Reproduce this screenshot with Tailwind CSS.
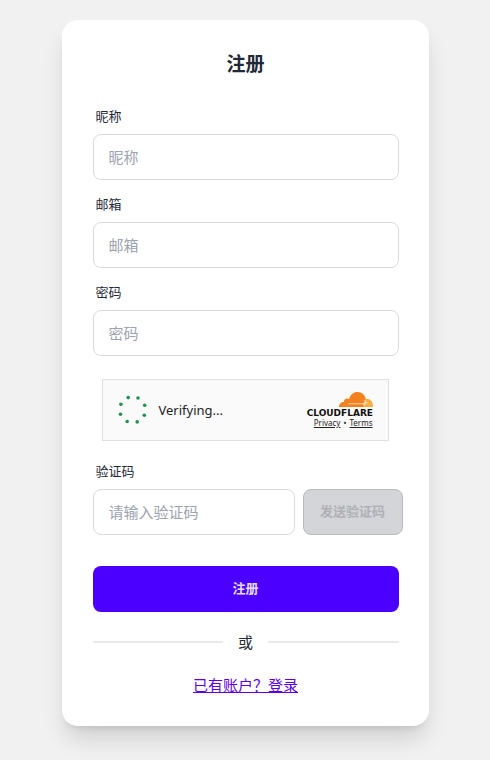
<!DOCTYPE html>
<html lang="zh-CN">
<head>
  <meta charset="UTF-8" />
  <meta name="viewport" content="width=device-width, initial-scale=1.0" />
  <title>注册</title>
  <script src="https://cdn.jsdelivr.net/npm/@tailwindcss/browser@4"></script>
</head>
<body class="min-h-screen bg-[#f1f1f1] px-4 py-5 font-['Noto_Sans','Noto_Sans_CJK_SC',sans-serif] text-[#1f2937] antialiased">

  <!-- Register card -->
  <main class="w-full max-w-[367px] mx-auto bg-white rounded-2xl shadow-[0_16px_24px_-4px_rgb(0_0_0/0.14),0_6px_10px_-6px_rgb(0_0_0/0.14)] pl-[31px] pr-[30px] pt-[31px] pb-[29px]">
    <h1 class="text-[19px] leading-[26px] font-bold text-center mb-[29px]">注册</h1>

    <form>
      <div class="mb-[14px]">
        <label for="nickname" class="block px-[3px] mb-2 text-[13px] leading-5">昵称</label>
        <input id="nickname" type="text" placeholder="昵称" class="block w-full h-[46px] px-[15px] text-[15px] border border-[#d9dadc] rounded-lg placeholder:text-[#9ca3af]" />
      </div>
      <div class="mb-[14px]">
        <label for="email" class="block px-[3px] mb-2 text-[13px] leading-5">邮箱</label>
        <input id="email" type="email" placeholder="邮箱" class="block w-full h-[46px] px-[15px] text-[15px] border border-[#d9dadc] rounded-lg placeholder:text-[#9ca3af]" />
      </div>
      <div>
        <label for="password" class="block px-[3px] mb-2 text-[13px] leading-5">密码</label>
        <input id="password" type="password" placeholder="密码" class="block w-full h-[46px] px-[15px] text-[15px] border border-[#d9dadc] rounded-lg placeholder:text-[#9ca3af]" />
      </div>

      <!-- Turnstile -->
      <div class="flex items-center justify-between h-[62px] ml-[9px] mr-[10px] mt-[23px] mb-5 px-[15px] bg-[#fafafa] border border-[#e0e0e0]">
        <div class="flex items-center gap-[11px]">
          <svg class="w-[30px] h-[30px]" viewBox="0 0 30 30" fill="#1f9150">
            <circle cx="10.2" cy="2.6" r="1.8" />
            <circle cx="20" cy="3" r="1.8" />
            <circle cx="26.7" cy="10.2" r="1.8" />
            <circle cx="26.3" cy="20.2" r="1.8" />
            <circle cx="19.2" cy="26.9" r="1.8" />
            <circle cx="9.2" cy="26.5" r="1.8" />
            <circle cx="2.5" cy="19.3" r="1.8" />
            <circle cx="2.9" cy="9.3" r="1.8" />
          </svg>
          <span class="text-[13px] leading-5 text-[#232323]">Verifying...</span>
        </div>
        <div class="flex flex-col items-end">
          <svg class="w-[70px] h-[26px]" viewBox="0 0 70 26" role="img" aria-label="Cloudflare">
            <path d="M36 16c0-3 2-5 5-5-.5-3 3-4.500 5-2.800C47.500 3.500 50.500 1 54.500 1c4.500 0 7.500 3 8.300 7 .5 3-.2 5.500-1.300 8z" fill="#f4811f" />
            <path d="M61 16l1.200-3.500c.5-1.500-.3-2.300-1.800-2.400l3-2.300c4 0 6.600 3.200 6.600 7.200V16z" fill="#faad3f" />
            <path d="M45 12.200h14.500c1.200 0 1.800-.7 2-1.700l.6-2.500 1 3 3 1-3.600.8-1.600 3.200-.7-2.800H45z" fill="#fff" fill-opacity=".65" />
            <text x="70" y="25" text-anchor="end" font-family="DejaVu Sans, sans-serif" font-size="9" font-weight="700" fill="#111">CLOUDFLARE</text>
          </svg>
          <div class="flex gap-[3px] text-[8px] leading-3 text-[#232323]">
            <a href="#" class="underline">Privacy</a>
            <span>•</span>
            <a href="#" class="underline">Terms</a>
          </div>
        </div>
      </div>

      <div>
        <label for="code" class="block px-[3px] mb-2 text-[13px] leading-5">验证码</label>
        <div class="flex gap-2 -mr-1">
          <input id="code" type="text" placeholder="请输入验证码" class="flex-1 min-w-0 h-[46px] px-[15px] text-[15px] border border-[#d9dadc] rounded-lg placeholder:text-[#9ca3af]" />
          <button type="button" disabled class="w-[100px] h-[46px] text-[13px] font-semibold text-[#aeb0b4] bg-[#d3d5d8] border border-[#b9bbbe] rounded-lg">发送验证码</button>
        </div>
      </div>

      <button type="submit" class="block w-full h-[46px] mt-[31px] text-[13px] font-semibold text-[#e6ddff] bg-[#4b00ff] rounded-lg">注册</button>
    </form>

    <div class="flex items-center gap-[15px] mt-[18px] mb-[19px] text-[15px] leading-6">
      <span class="flex-1 h-[2px] bg-[#e8e9ea]"></span>
      <span>或</span>
      <span class="flex-1 h-[2px] bg-[#e8e9ea]"></span>
    </div>

    <p class="text-center text-[15px] leading-6">
      <a href="#" class="text-[#5b00e8] underline">已有账户？登录</a>
    </p>
  </main>

</body>
</html>
